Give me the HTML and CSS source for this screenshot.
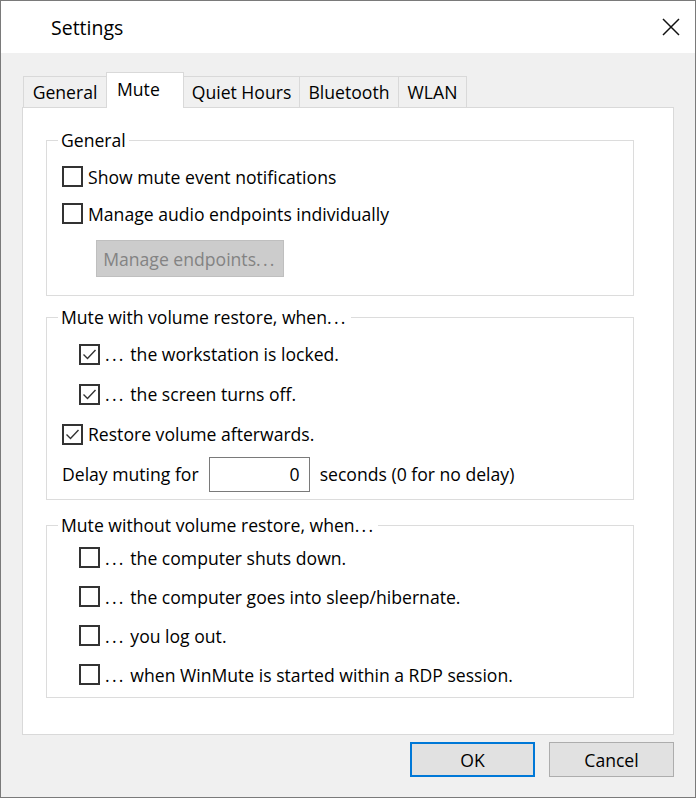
FILE: index.html
```html
<!DOCTYPE html>
<html lang="en">

<head>
    <meta charset="UTF-8">
    <title>Settings</title>
    <link rel="stylesheet" href="styles.css">
</head>

<body>
    <div class="window">
        <div class="titlebar">
            <span class="title">Settings</span>
            <svg class="close" viewBox="0 0 18 18">
                <path d="M1 1L17 17M17 1L1 17" stroke="#111" stroke-width="1.5" fill="none" />
            </svg>
        </div>

        <div class="client">
            <div class="tabs">
                <div class="tab tab-general">General</div>
                <div class="tab tab-mute active">Mute</div>
                <div class="tab tab-quiet">Quiet Hours</div>
                <div class="tab tab-bt">Bluetooth</div>
                <div class="tab tab-wlan">WLAN</div>
            </div>

            <div class="panel">
                <fieldset class="group group-general">
                    <legend>General</legend>
                    <label class="row"><span class="box"></span><span>Show mute event notifications</span></label>
                    <label class="row"><span class="box"></span><span>Manage audio endpoints individually</span></label>
                    <button class="btn-disabled" disabled>Manage endpoints<span class="dots">...</span></button>
                </fieldset>

                <fieldset class="group group-restore">
                    <legend>Mute with volume restore, when<span class="dots">...</span></legend>
                    <label class="row indent"><span class="box checked"><svg viewBox="0 0 17 17"><path d="M2.5 8.5L6.5 12.5L14.5 4" /></svg></span><span><span class="dots">...</span> the workstation is locked.</span></label>
                    <label class="row indent"><span class="box checked"><svg viewBox="0 0 17 17"><path d="M2.5 8.5L6.5 12.5L14.5 4" /></svg></span><span><span class="dots">...</span> the screen turns off.</span></label>
                    <label class="row"><span class="box checked"><svg viewBox="0 0 17 17"><path d="M2.5 8.5L6.5 12.5L14.5 4" /></svg></span><span>Restore volume afterwards.</span></label>
                    <div class="row">
                        <span>Delay muting for</span>
                        <span class="field">0</span>
                        <span>seconds (0 for no delay)</span>
                    </div>
                </fieldset>

                <fieldset class="group group-norestore">
                    <legend>Mute without volume restore, when<span class="dots">...</span></legend>
                    <label class="row indent"><span class="box"></span><span><span class="dots">...</span> the computer shuts down.</span></label>
                    <label class="row indent"><span class="box"></span><span><span class="dots">...</span> the computer goes into sleep/hibernate.</span></label>
                    <label class="row indent"><span class="box"></span><span><span class="dots">...</span> you log out.</span></label>
                    <label class="row indent"><span class="box"></span><span><span class="dots">...</span> when WinMute is started within a RDP session.</span></label>
                </fieldset>
            </div>

            <div class="buttons">
                <button class="btn btn-default">OK</button>
                <button class="btn">Cancel</button>
            </div>
        </div>
    </div>
</body>

</html>
```

FILE: styles.css
```css
* {
    margin: 0;
    padding: 0;
    box-sizing: border-box;
}

body {
    background: #fff;
    font-family: "Open Sans", "Noto Sans", sans-serif;
    font-size: 17.6px;
    color: #000;
}

.window {
    width: 696px;
    height: 798px;
    border: 1px solid #7a7a7a;
    background: #f0f0f0;
    display: flex;
    flex-direction: column;
}

.titlebar {
    height: 52px;
    background: #fff;
    display: flex;
    align-items: center;
    justify-content: space-between;
    padding: 0 15px 0 50px;
}

.title {
    font-size: 19.5px;
}

.close {
    width: 18px;
    height: 18px;
}

.client {
    flex: 1;
    display: flex;
    flex-direction: column;
    padding: 19px 21px 0;
}

/* tab strip */
.tabs {
    display: flex;
    align-items: flex-end;
    padding-left: 1px;
}

.tab {
    height: 31px;
    border: 1px solid #d9d9d9;
    border-bottom: none;
    margin-left: -1px;
    display: flex;
    align-items: center;
    justify-content: center;
}

.tab:first-child {
    margin-left: 0;
}

.tab.active {
    height: 36px;
    margin-bottom: -1px;
    background: #fff;
    position: relative;
    z-index: 1;
    padding-bottom: 4px;
}

.tab-general { width: 84px; }
.tab-mute { width: 78px; justify-content: flex-start; padding-left: 10px; }
.tab-quiet { width: 117px; }
.tab-bt { width: 100px; }
.tab-wlan { width: 69px; }

.panel {
    height: 628px;
    background: #fff;
    border: 1px solid #d9d9d9;
    padding: 20px 0 0 23px;
}

/* group boxes */
.group {
    width: 588px;
    border: 1px solid #dcdcdc;
    padding: 6px 0 18px 15px;
    min-width: 0;
}

.group legend {
    line-height: 24px;
    padding: 0 3px;
    margin-left: -4px;
}

.group-restore {
    margin-top: 9px;
    padding: 5px 0 5px 15px;
}

.group-restore .row {
    height: 40px;
}

.group-norestore {
    margin-top: 13px;
    padding: 1px 0 3px 15px;
}

.group-norestore .row {
    height: 39px;
}

.row {
    height: 37px;
    display: flex;
    align-items: center;
}

.row.indent {
    margin-left: 17px;
}

.dots {
    letter-spacing: 2.3px;
}

.box {
    width: 21px;
    height: 21px;
    border: 2px solid #333;
    background: #fff;
    margin-right: 5px;
    flex-shrink: 0;
}

.box svg {
    display: block;
    width: 17px;
    height: 17px;
    fill: none;
    stroke: #333;
    stroke-width: 1.4;
}

.btn-disabled {
    display: block;
    width: 188px;
    height: 37px;
    margin: 8px 0 0 34px;
    background: #cccccc;
    border: 1px solid #bfbfbf;
    color: #838383;
    font: inherit;
}

.field {
    width: 101px;
    height: 35px;
    margin: 0 10px;
    border: 1px solid #7a7a7a;
    display: flex;
    align-items: center;
    justify-content: flex-end;
    padding-right: 9px;
}

/* dialog buttons */
.buttons {
    display: flex;
    justify-content: flex-end;
    gap: 14px;
    margin-top: 7px;
}

.btn {
    width: 125px;
    height: 35px;
    background: #e1e1e1;
    border: 1px solid #adadad;
    font: inherit;
    color: #000;
}

.btn-default {
    border: 2px solid #0078d7;
}
```
